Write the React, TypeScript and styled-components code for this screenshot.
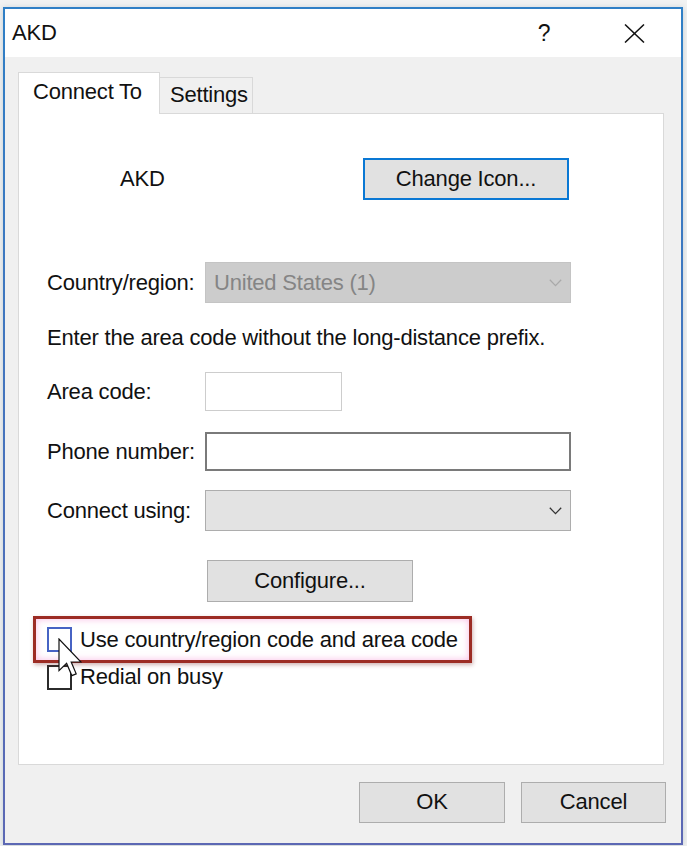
import React from 'react';
import { createGlobalStyle, styled } from 'styled-components';

const GlobalStyle = createGlobalStyle`
  html, body {
    margin: 0;
    padding: 0;
    background: #f1f2f2;
  }

  body {
    font-family: 'Liberation Sans', Arial, sans-serif;
    font-size: 22px;
    letter-spacing: -0.2px;
    line-height: 26px;
    color: #111;
  }
`;

function Chevron({ color }: { color: string }) {
  return (
    <svg width="13" height="8" viewBox="0 0 13 8">
      <polyline points="0.8,0.8 6.5,6.6 12.2,0.8" fill="none" stroke={color} strokeWidth="1.3" />
    </svg>
  );
}

function CloseIcon() {
  return (
    <svg width="21" height="19" viewBox="0 0 21 19">
      <line x1="1" y1="0.5" x2="20" y2="18.5" stroke="#111" strokeWidth="1.5" />
      <line x1="20" y1="0.5" x2="1" y2="18.5" stroke="#111" strokeWidth="1.5" />
    </svg>
  );
}

function Pointer() {
  return (
    <svg width="24" height="40" viewBox="0 0 12 20">
      <path
        d="M0.5 0.5 L0.5 16.3 L4.3 12.6 L6.9 18.8 L9.1 17.9 L6.6 12 L11.5 12 Z"
        fill="#fff"
        stroke="#111"
        strokeWidth="0.6"
        strokeLinejoin="miter"
      />
    </svg>
  );
}

export default function App() {
  return (
    <Page>
      <GlobalStyle />
      <Dialog>
        <TitleBar>
          <Title>AKD</Title>
          <TitleButton>?</TitleButton>
          <TitleButton $gap={44}>
            <CloseIcon />
          </TitleButton>
        </TitleBar>

        <Body>
          <TabRow>
            <Tab $active>Connect To</Tab>
            <Tab>Settings</Tab>
          </TabRow>

          <Panel>
            <IconRow>
              <EntryName>AKD</EntryName>
              <PushButton $width={206} $height={42} $focused>
                Change Icon...
              </PushButton>
            </IconRow>

            <Form>
              <FieldRow $top={62}>
                <Label>Country/region:</Label>
                <Select $disabled>
                  <span>United States (1)</span>
                  <Chevron color="#a9a9a9" />
                </Select>
              </FieldRow>

              <Hint>Enter the area code without the long-distance prefix.</Hint>

              <FieldRow $top={21}>
                <Label>Area code:</Label>
                <TextBox $width={137} $muted />
              </FieldRow>

              <FieldRow $top={21}>
                <Label>Phone number:</Label>
                <TextBox $width={366} />
              </FieldRow>

              <FieldRow $top={19}>
                <Label>Connect using:</Label>
                <Select>
                  <span />
                  <Chevron color="#333" />
                </Select>
              </FieldRow>

              <ConfigureSlot>
                <PushButton $width={206} $height={42}>
                  Configure...
                </PushButton>
              </ConfigureSlot>

              <Highlight>
                <CheckRow>
                  <CheckBox $hover />
                  <span>Use country/region code and area code</span>
                </CheckRow>
                <CursorMark>
                  <Pointer />
                </CursorMark>
              </Highlight>

              <CheckRow $top={1}>
                <CheckBox />
                <span>Redial on busy</span>
              </CheckRow>
            </Form>
          </Panel>

          <ButtonRow>
            <PushButton $width={146} $height={41}>
              OK
            </PushButton>
            <PushButton $width={145} $height={41}>
              Cancel
            </PushButton>
          </ButtonRow>
        </Body>
      </Dialog>
    </Page>
  );
}

const Page = styled.div`
  padding: 7px 0 0 3px;
  min-height: 100vh;
  box-sizing: border-box;
`;

const Dialog = styled.div`
  width: 680px;
  height: 838px;
  box-sizing: border-box;
  border: 2px solid #3d78c2;
  border-image: linear-gradient(#2f7fc6, #5c68b4) 1;
  display: flex;
  flex-direction: column;
  background: #f0f0f0;
  box-shadow: 0 1px 6px rgba(60, 90, 110, 0.25);
`;

const TitleBar = styled.div`
  height: 48px;
  flex: 0 0 auto;
  background: #fff;
  display: flex;
  align-items: center;
  padding: 0 24px 0 7px;
`;

const Title = styled.div`
  flex: 1;
`;

const TitleButton = styled.div<{ $gap?: number }>`
  width: 46px;
  height: 48px;
  display: flex;
  align-items: center;
  justify-content: center;
  margin-left: ${(p) => p.$gap ?? 0}px;
  font-size: 23px;
`;

const Body = styled.div`
  flex: 1;
  display: flex;
  flex-direction: column;
  padding: 15px 17px 0 13px;
`;

const TabRow = styled.div`
  display: flex;
  align-items: flex-end;
  height: 41px;
`;

const Tab = styled.div<{ $active?: boolean }>`
  position: relative;
  z-index: ${(p) => (p.$active ? 1 : 0)};
  box-sizing: border-box;
  width: ${(p) => (p.$active ? 142 : 93)}px;
  height: ${(p) => (p.$active ? 42 : 36)}px;
  margin-bottom: ${(p) => (p.$active ? -1 : 0)}px;
  padding: ${(p) => (p.$active ? '6px 0 0 14px' : '4px 0 0 10px')};
  background: ${(p) => (p.$active ? '#fff' : '#f0f0f0')};
  border: 1px solid #d9d9d9;
  border-bottom: none;
  border-left: ${(p) => (p.$active ? '1px solid #d9d9d9' : 'none')};
  white-space: nowrap;
`;

const Panel = styled.div`
  height: 652px;
  box-sizing: border-box;
  background: #fff;
  border: 1px solid #d9d9d9;
  padding-top: 44px;
  display: flex;
  flex-direction: column;
`;

const IconRow = styled.div`
  display: flex;
  align-items: center;
  padding-left: 101px;
`;

const EntryName = styled.div`
  width: 243px;
`;

const PushButton = styled.div<{ $width: number; $height: number; $focused?: boolean }>`
  width: ${(p) => p.$width}px;
  height: ${(p) => p.$height}px;
  box-sizing: border-box;
  display: flex;
  align-items: center;
  justify-content: center;
  background: #e1e1e1;
  border: ${(p) => (p.$focused ? '2px solid #0a78d4' : '1px solid #adadad')};
  padding-bottom: 1px;
`;

const Form = styled.div`
  display: flex;
  flex-direction: column;
  padding-left: 28px;
`;

const FieldRow = styled.div<{ $top: number }>`
  display: grid;
  grid-template-columns: 158px auto;
  align-items: center;
  margin-top: ${(p) => p.$top}px;
`;

const Label = styled.div`
  white-space: nowrap;
`;

const Select = styled.div<{ $disabled?: boolean }>`
  width: 366px;
  height: 41px;
  box-sizing: border-box;
  display: flex;
  align-items: center;
  justify-content: space-between;
  padding: 0 8px 0 8px;
  background: ${(p) => (p.$disabled ? '#cccccc' : '#e3e3e3')};
  border: 1px solid ${(p) => (p.$disabled ? '#c4c4c4' : '#adadad')};
  color: #858585;
`;

const TextBox = styled.div<{ $width: number; $muted?: boolean }>`
  width: ${(p) => p.$width}px;
  height: 39px;
  box-sizing: border-box;
  background: #fff;
  border: ${(p) => (p.$muted ? '1px solid #cdcdcd' : '2px solid #7a7a7a')};
`;

const Hint = styled.div`
  margin-top: 22px;
  white-space: nowrap;
`;

const ConfigureSlot = styled.div`
  margin: 29px 0 0 160px;
`;

const Highlight = styled.div`
  position: relative;
  width: 439px;
  height: 47px;
  box-sizing: border-box;
  margin: 14px 0 0 -14px;
  padding-left: 11px;
  display: flex;
  align-items: center;
  border: 3px solid #9c2c24;
  background: #fff;
  box-shadow: 1px 2px 4px rgba(120, 40, 40, 0.35), inset 0 0 7px rgba(245, 130, 205, 0.55);
`;

const CheckRow = styled.div<{ $top?: number }>`
  display: flex;
  align-items: center;
  gap: 8px;
  margin-top: ${(p) => p.$top ?? 0}px;
  white-space: nowrap;
`;

const CheckBox = styled.div<{ $hover?: boolean }>`
  width: 25px;
  height: 25px;
  box-sizing: border-box;
  flex: 0 0 auto;
  background: #fff;
  border: 2px solid ${(p) => (p.$hover ? '#4763c4' : '#2b2b2b')};
`;

const CursorMark = styled.div`
  position: absolute;
  left: 22px;
  top: 19px;
  width: 24px;
  height: 40px;
  z-index: 2;
`;

const ButtonRow = styled.div`
  display: flex;
  justify-content: flex-end;
  gap: 16px;
  margin: 17px -2px 0 0;
`;
